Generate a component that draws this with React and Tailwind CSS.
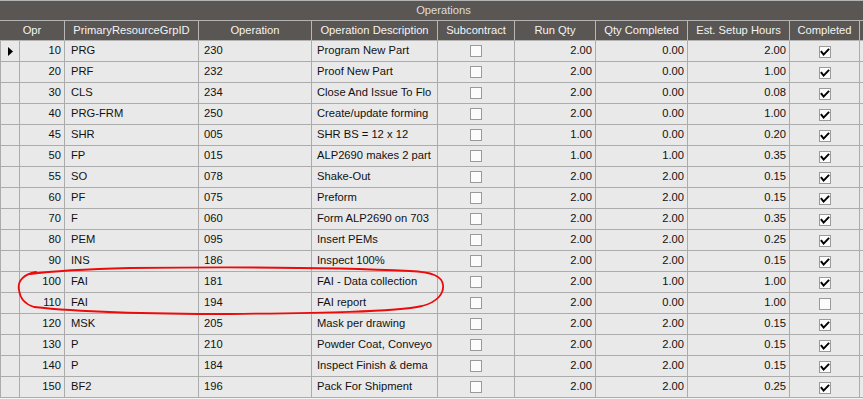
import React from "react";

const rows = [
  ["10", "PRG", "230", "Program New Part", "2.00", "0.00", "2.00", true],
  ["20", "PRF", "232", "Proof New Part", "2.00", "0.00", "1.00", true],
  ["30", "CLS", "234", "Close And Issue To Flo", "2.00", "0.00", "0.08", true],
  ["40", "PRG-FRM", "250", "Create/update forming", "2.00", "0.00", "1.00", true],
  ["45", "SHR", "005", "SHR BS = 12 x 12", "1.00", "0.00", "0.20", true],
  ["50", "FP", "015", "ALP2690 makes 2 part", "1.00", "1.00", "0.35", true],
  ["55", "SO", "078", "Shake-Out", "2.00", "2.00", "0.15", true],
  ["60", "PF", "075", "Preform", "2.00", "2.00", "0.15", true],
  ["70", "F", "060", "Form ALP2690 on 703", "2.00", "2.00", "0.35", true],
  ["80", "PEM", "095", "Insert PEMs", "2.00", "2.00", "0.25", true],
  ["90", "INS", "186", "Inspect 100%", "2.00", "2.00", "0.15", true],
  ["100", "FAI", "181", "FAI - Data collection", "2.00", "1.00", "1.00", true],
  ["110", "FAI", "194", "FAI report", "2.00", "0.00", "1.00", false],
  ["120", "MSK", "205", "Mask per drawing", "2.00", "2.00", "0.15", true],
  ["130", "P", "210", "Powder Coat, Conveyo", "2.00", "2.00", "0.15", true],
  ["140", "P", "184", "Inspect Finish & dema", "2.00", "2.00", "0.15", true],
  ["150", "BF2", "196", "Pack For Shipment", "2.00", "2.00", "0.25", true],
];

function Box({ checked }) {
  return (
    <div className="w-[12px] h-[12px] border border-[#9a9a9a] bg-[#fcfcfc] flex items-center justify-center">
      {checked && (
        <svg width="10" height="10" viewBox="0 0 10 10">
          <polyline
            points="1.5,5 3.6,7.6 8.4,2.6"
            fill="none"
            stroke="#000"
            strokeWidth="2"
            strokeLinecap="square"
          />
        </svg>
      )}
    </div>
  );
}

const cell = "h-full border-r border-[#acacac] overflow-hidden whitespace-nowrap flex items-center";
const hcell = "h-full border-r border-[#b8b8b8] flex items-center justify-center whitespace-nowrap";

export default function App() {
  return (
    <div className="relative w-[863px] h-[399px] overflow-hidden bg-[#f4f4f4] text-[11.2px] leading-none font-['Liberation_Sans',Arial,sans-serif]">
      <div className="h-[20px] border-t border-[#b4b4b4] bg-[#595653] text-[#dedede] flex items-center justify-center pl-[24px]">
        Operations
      </div>
      <div className="h-[21px] border-y border-[#b4b4b4] bg-[#595653] text-[#f4f4f4] flex">
        <div className={`${hcell} w-[65px]`}>Opr</div>
        <div className={`${hcell} w-[134px]`}>PrimaryResourceGrpID</div>
        <div className={`${hcell} w-[113px]`}>Operation</div>
        <div className={`${hcell} w-[126px]`}>Operation Description</div>
        <div className={`${hcell} w-[77px]`}>Subcontract</div>
        <div className={`${hcell} w-[81px]`}>Run Qty</div>
        <div className={`${hcell} w-[92px]`}>Qty Completed</div>
        <div className={`${hcell} w-[102px]`}>Est. Setup Hours</div>
        <div className={`${hcell} w-[70px]`}>Completed</div>
        <div className="flex-1" />
      </div>
      <div className="border-l border-[#acacac]">
        {rows.map((r, i) => (
          <div key={r[0]} className="h-[21px] border-b border-[#acacac] bg-[#e9e9e9] text-[#111] flex">
            <div className={`${cell} w-[19px] pl-[7px]`}>
              {i === 0 && (
                <svg width="5" height="9" viewBox="0 0 5 9">
                  <polygon points="0,0 5,4.5 0,9" fill="#000" />
                </svg>
              )}
            </div>
            <div className={`${cell} w-[45px] justify-end pr-[3px]`}>{r[0]}</div>
            <div className={`${cell} w-[134px] pl-[6px]`}>{r[1]}</div>
            <div className={`${cell} w-[113px] pl-[5px]`}>{r[2]}</div>
            <div className={`${cell} w-[126px] pl-[5px]`}>{r[3]}</div>
            <div className={`${cell} w-[77px] justify-center`}>
              <Box checked={false} />
            </div>
            <div className={`${cell} w-[81px] justify-end pr-[3px]`}>{r[4]}</div>
            <div className={`${cell} w-[92px] justify-end pr-[3px]`}>{r[5]}</div>
            <div className={`${cell} w-[102px] justify-end pr-[3px]`}>{r[6]}</div>
            <div className={`${cell} w-[70px] justify-center pt-[2px]`}>
              <Box checked={r[7]} />
            </div>
            <div className="flex-1" />
          </div>
        ))}
      </div>
      <svg
        className="absolute inset-0 pointer-events-none"
        width="863"
        height="399"
        viewBox="0 0 863 399"
      >
        <path
          d="M 36 272 C 24 274, 17 281, 19 290 C 20 298, 24 304, 34 307 C 80 312, 150 314, 230 314 C 320 313, 395 312, 422 306 C 438 302, 444 293, 443 285 C 442 276, 432 272, 410 271 C 330 267, 220 267, 130 268 C 90 269, 60 270, 30 274"
          fill="none"
          stroke="#ec0b0b"
          strokeWidth="1.8"
          strokeLinecap="round"
        />
      </svg>
    </div>
  );
}
